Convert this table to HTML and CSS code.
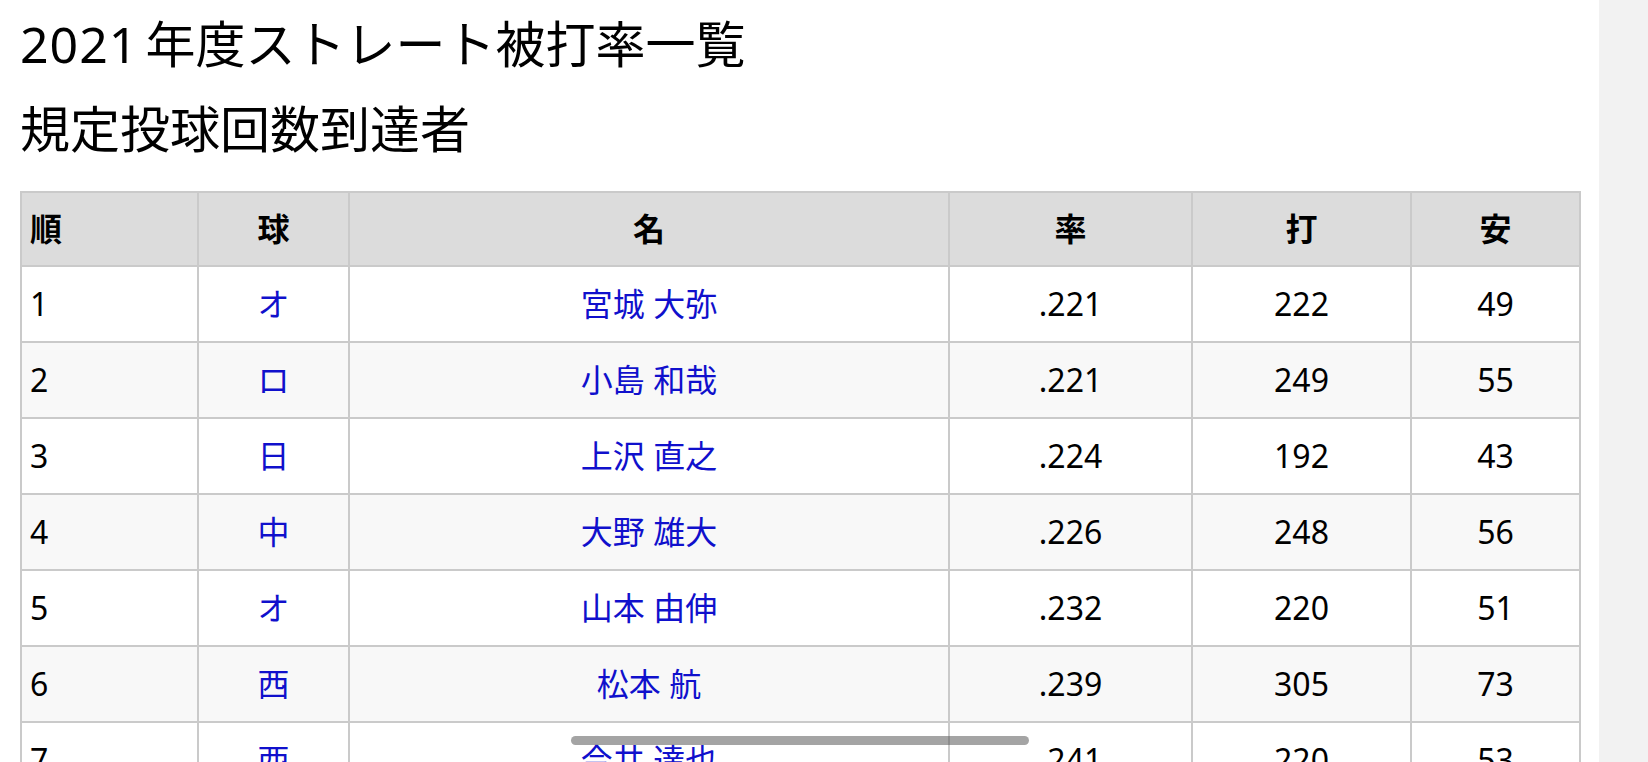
FILE: index.html
```html
<!DOCTYPE html>
<html lang="ja">
<head>
<meta charset="utf-8">
<title>2021年度ストレート被打率一覧</title>
<link rel="stylesheet" href="styles.css">
</head>
<body>
<div class="page">
  <main class="content">
    <h1 class="title"><span class="year">2021</span>年度ストレート被打率一覧</h1>
    <h2 class="subtitle">規定投球回数到達者</h2>
    <table class="stats">
      <colgroup>
        <col class="c-rank"><col class="c-team"><col class="c-name"><col class="c-rate"><col class="c-ab"><col class="c-hit">
      </colgroup>
      <thead>
        <tr><th class="left">順</th><th>球</th><th>名</th><th>率</th><th>打</th><th>安</th></tr>
      </thead>
      <tbody>
        <tr><td class="left">1</td><td><a href="#">オ</a></td><td><a href="#">宮城 大弥</a></td><td>.221</td><td>222</td><td>49</td></tr>
        <tr><td class="left">2</td><td><a href="#">ロ</a></td><td><a href="#">小島 和哉</a></td><td>.221</td><td>249</td><td>55</td></tr>
        <tr><td class="left">3</td><td><a href="#">日</a></td><td><a href="#">上沢 直之</a></td><td>.224</td><td>192</td><td>43</td></tr>
        <tr><td class="left">4</td><td><a href="#">中</a></td><td><a href="#">大野 雄大</a></td><td>.226</td><td>248</td><td>56</td></tr>
        <tr><td class="left">5</td><td><a href="#">オ</a></td><td><a href="#">山本 由伸</a></td><td>.232</td><td>220</td><td>51</td></tr>
        <tr><td class="left">6</td><td><a href="#">西</a></td><td><a href="#">松本 航</a></td><td>.239</td><td>305</td><td>73</td></tr>
        <tr><td class="left">7</td><td><a href="#">西</a></td><td><a href="#">今井 達也</a></td><td>.241</td><td>220</td><td>53</td></tr>
      </tbody>
    </table>
  </main>
  <aside class="side"></aside>
</div>
<div class="scroll-indicator"></div>
</body>
</html>
```

FILE: styles.css
```css
html, body {
  margin: 0;
  padding: 0;
  height: 100%;
  overflow: hidden;
}

body {
  font-family: "Noto Sans", "Noto Sans CJK JP", sans-serif;
  color: #000;
  background: #f2f2f2;
}

.page {
  display: flex;
  height: 762px;
}

.content {
  width: 1599px;
  flex: none;
  background: #fff;
  padding: 14px 18px 0 20px;
  box-sizing: border-box;
}

.side {
  flex: 1;
  background: #f2f2f2;
}

.title,
.subtitle {
  margin: 0;
  font-size: 50px;
  font-weight: normal;
  line-height: 60px;
}

.title .year {
  letter-spacing: 1px;
  margin-right: 7px;
}

.subtitle {
  margin-top: 25px;
}

.stats {
  margin-top: 32px;
  width: 1561px;
  table-layout: fixed;
  border-collapse: collapse;
  font-size: 32px;
}

.c-rank { width: 177px; }
.c-team { width: 151px; }
.c-name { width: 600px; }
.c-rate { width: 243px; }
.c-ab   { width: 219px; }
.c-hit  { width: 169px; }

.stats th,
.stats td {
  border: 2px solid #cacaca;
  height: 74px;
  padding: 0 8px;
  text-align: center;
  vertical-align: middle;
  line-height: 40px;
  white-space: nowrap;
}

.stats th {
  background: #dcdcdc;
  font-weight: bold;
  height: 72px;
}

.stats .left {
  text-align: left;
}

.stats tbody tr:nth-child(even) td {
  background: #f8f8f8;
}

.stats a {
  color: #1010cc;
  text-decoration: none;
}

.scroll-indicator {
  position: absolute;
  left: 571px;
  top: 736px;
  width: 458px;
  height: 9px;
  border-radius: 5px;
  background: rgba(90, 90, 90, 0.55);
}
```
